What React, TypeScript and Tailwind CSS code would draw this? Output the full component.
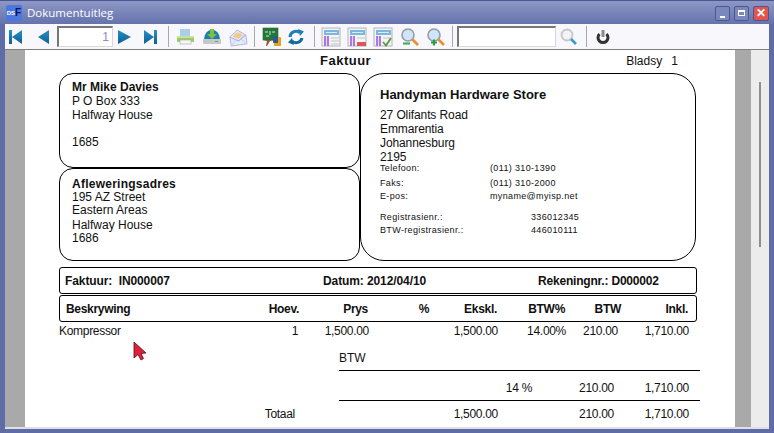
import * as React from "react";

const rowGrid =
  "grid grid-cols-[240px_70px_61px_68px_68px_56px_67px] text-right tracking-[-0.3px]";
const headGrid =
  "grid grid-cols-[238px_70px_61px_68px_68px_56px_67px] text-right tracking-[-0.3px]";

function Sep({ className }: { className: string }) {
  return <div className={`w-px h-[21px] bg-[#a8a8a8] ${className}`} />;
}

function Arrow({ dir, bar, className }: { dir: "l" | "r"; bar?: boolean; className: string }) {
  let tri = "";
  if (dir === "l") tri = bar ? "M17 3 L17 17 L7 10 Z" : "M17 3 L17 17 L6 10 Z";
  else tri = bar ? "M3 3 L3 17 L13 10 Z" : "M3 3 L3 17 L16 10 Z";
  const barX = dir === "l" ? 4 : 13;
  return (
    <svg width="20" height="20" viewBox="0 0 20 20" className={className}>
      <defs>
        <linearGradient id="navg" x1="0" y1="0" x2="0" y2="1">
          <stop offset="0" stopColor="#2a8fc4" />
          <stop offset="1" stopColor="#0d5f96" />
        </linearGradient>
      </defs>
      <path d={tri} fill="url(#navg)" />
      {bar && <rect x={barX} y="3" width="3" height="14" fill="url(#navg)" />}
    </svg>
  );
}

function PrintIcon({ className }: { className: string }) {
  return (
    <svg width="20" height="20" viewBox="0 0 20 20" className={className}>
      <rect x="5" y="2" width="10" height="7" fill="#a9cdea" />
      <rect x="2" y="9" width="17" height="6" rx="1" fill="#9ccb68" />
      <rect x="2" y="9" width="17" height="2" fill="#c6e4a0" />
      <rect x="5" y="13" width="11" height="4" fill="#f6f6f6" stroke="#a8a8a8" strokeWidth="0.6" />
    </svg>
  );
}

function DownloadIcon({ className }: { className: string }) {
  return (
    <svg width="20" height="20" viewBox="0 0 20 20" className={className}>
      <path d="M2 12 Q3 3 10 3 Q17 3 18 12 Z" fill="#1f7fa8" />
      <path d="M8 2 H12 V7 H15 L10 12 L5 7 H8 Z" fill="#7cc043" />
      <rect x="1" y="12" width="18" height="5" rx="1" fill="#c4c8cc" />
      <rect x="13" y="14" width="3" height="1" fill="#6fb23a" />
    </svg>
  );
}

function MailIcon({ className }: { className: string }) {
  return (
    <svg width="20" height="20" viewBox="0 0 20 20" className={className}>
      <g transform="rotate(-8 10 10)">
        <path d="M2 9 L10 3 L18 9 V18 H2 Z" fill="#e4eafa" stroke="#a4b0dc" strokeWidth="0.8" />
        <path d="M5 9 Q10 2 15 9 L10 12 Z" fill="#f2ca90" />
        <path d="M2 9 L10 14 L18 9" fill="none" stroke="#a4b0dc" strokeWidth="1" />
        <path d="M2 18 L8 12 M18 18 L12 12" stroke="#c0cbe8" strokeWidth="0.8" />
      </g>
    </svg>
  );
}

function BoardIcon({ className }: { className: string }) {
  return (
    <svg width="20" height="20" viewBox="0 0 20 20" className={className}>
      <rect x="1" y="1" width="15" height="12" fill="#1f7a3a" stroke="#3a5a2a" strokeWidth="0.6" />
      <path d="M3 5 H6 M8 4 V8 M10 5 H13 M4 9 H7" stroke="#e8f4e0" strokeWidth="0.9" />
      <path d="M1 13 H12 L8 14 L5 19 H4 L5 14 Z" fill="#8a5a2a" />
      <rect x="12" y="10" width="7" height="9" rx="1" fill="#e8a020" />
      <rect x="11" y="9" width="5" height="7" rx="1" fill="#2a5a8a" />
    </svg>
  );
}

function RefreshIcon({ className }: { className: string }) {
  return (
    <svg width="20" height="20" viewBox="0 0 20 20" className={className}>
      <path d="M4 10 A6 6 0 0 1 13.5 5.5" fill="none" stroke="#1f7fb0" strokeWidth="3" />
      <path d="M12 2 L18 4.5 L14 9 Z" fill="#1f7fb0" />
      <path d="M16 11 A6 6 0 0 1 6 14" fill="none" stroke="#0f6a9c" strokeWidth="3" />
      <path d="M8 18 L2 15.5 L6 11 Z" fill="#0f6a9c" />
    </svg>
  );
}

function ReportIcon({ variant, className }: { variant: "plain" | "del" | "check"; className: string }) {
  return (
    <svg width="20" height="20" viewBox="0 0 20 20" className={className}>
      <rect x="1" y="1" width="18" height="18" fill="#f4f4f4" stroke="#b4b4b4" strokeWidth="1" />
      <rect x="3" y="3" width="15" height="5" fill="#7ab8e0" />
      <rect x="5" y="5" width="11" height="1" fill="#dbeaf6" />
      <rect x="3" y="9" width="5" height="10" fill="#a878e8" />
      <rect x="5" y="9" width="1" height="10" fill="#e6dcf8" />
      {variant === "plain" && (
        <path d="M10 11 H18 M10 14 H18 M10 17 H18" stroke="#d0d4d8" strokeWidth="1.4" />
      )}
      {variant === "del" && (
        <>
          <path d="M10 11 H18" stroke="#d0d4d8" strokeWidth="1.4" />
          <rect x="10" y="15" width="9" height="4" fill="#d8555c" />
        </>
      )}
      {variant === "check" && (
        <>
          <path d="M10 11 H18" stroke="#d0d4d8" strokeWidth="1.4" />
          <path d="M10 15 L13 18.5 L18 11" fill="none" stroke="#5a9a3a" strokeWidth="1.8" />
        </>
      )}
    </svg>
  );
}

function ZoomIcon({ plus, className }: { plus?: boolean; className: string }) {
  return (
    <svg width="20" height="20" viewBox="0 0 20 20" className={className}>
      <circle cx="8" cy="8" r="6" fill="#cfe6f8" stroke="#969ba4" strokeWidth="1.6" />
      <path d="M12.5 12.5 L18 18" stroke="#e8902c" strokeWidth="2.6" />
      {plus ? (
        <path d="M5 15.5 H11 M8 12.5 V18.5" stroke="#2f9a4a" strokeWidth="2.2" />
      ) : (
        <path d="M3 16.5 H10" stroke="#4aa860" strokeWidth="2.2" />
      )}
    </svg>
  );
}

function SearchIcon({ className }: { className: string }) {
  return (
    <svg width="20" height="20" viewBox="0 0 20 20" className={className}>
      <circle cx="8" cy="8" r="5.5" fill="#f2f4f6" stroke="#c4c8cc" strokeWidth="1.8" />
      <path d="M12 12 L17 17" stroke="#3d9ac8" strokeWidth="2.6" />
    </svg>
  );
}

function PowerIcon({ className }: { className: string }) {
  return (
    <svg width="20" height="20" viewBox="0 0 20 20" className={className}>
      <path d="M6.5 7 A5 5 0 1 0 13.5 7" fill="none" stroke="#333" strokeWidth="3" />
      <rect x="8.5" y="3" width="3" height="7" fill="#8a8a8a" />
    </svg>
  );
}

function WinButton({ className, children }: { className: string; children: React.ReactNode }) {
  return (
    <div className={`h-[15px] rounded-[2px] border border-[#4a5790] flex items-center justify-center ${className}`}>
      {children}
    </div>
  );
}

export default function App() {
  return (
    <div className="relative w-[774px] h-[433px] overflow-hidden bg-[#5f6ca8] flex flex-col font-['Liberation_Sans',Arial,sans-serif] text-[12px] text-[#111]">
      {/* title bar */}
      <div className="h-[24px] shrink-0 flex items-center bg-gradient-to-b from-[#8e98c6] to-[#6572ac] border-t border-[#4a5690]">
        <div className="ml-[6px] w-[16px] h-[16px] bg-[#4a78e0] flex items-center justify-center rounded-[2px] text-[10px] font-bold leading-none text-[#0a1050]">
          <span className="text-white text-[6px]">DS</span>F
        </div>
        <span className="ml-[5px] text-white text-[11.5px] font-['Open_Sans',sans-serif]">Dokumentuitleg</span>
        <div className="ml-auto mr-[5px] flex items-center gap-[4px] mt-[1px]">
          <WinButton className="w-[15px] bg-[#7b88bd] items-end pb-[2px]">
            <div className="w-[5px] h-[2px] bg-white" />
          </WinButton>
          <WinButton className="w-[15px] bg-[#7b88bd]">
            <div className="w-[7px] h-[6px] border border-t-2 border-white" />
          </WinButton>
          <WinButton className="w-[16px] bg-[#e4534c] text-white text-[12px] font-bold leading-none">✕</WinButton>
        </div>
      </div>

      {/* inner window */}
      <div className="mx-[5px] mb-[4px] flex-1 flex flex-col min-h-0 bg-[#ececec]">
        {/* toolbar */}
        <div className="h-[26px] shrink-0 flex items-center bg-[#f8f8fc] border-b border-[#808080]">
          <Arrow dir="l" bar className="ml-0" />
          <Arrow dir="l" className="ml-[7px]" />
          <div className="ml-[5px] w-[56px] h-[21px] bg-white border border-[#d8d8d8] border-t-[#777] border-l-[#777] border-l-2 border-t-2 text-right pr-[3px] text-[12px] leading-[18px] text-[#8e86c8]">
            1
          </div>
          <Arrow dir="r" className="ml-[2px]" />
          <Arrow dir="r" bar className="ml-[6px]" />
          <Sep className="ml-[7px]" />
          <PrintIcon className="ml-[6px]" />
          <DownloadIcon className="ml-[7px]" />
          <MailIcon className="ml-[6px]" />
          <Sep className="ml-[6px]" />
          <BoardIcon className="ml-[7px]" />
          <RefreshIcon className="ml-[4px]" />
          <Sep className="ml-[8px]" />
          <ReportIcon variant="plain" className="ml-[6px]" />
          <ReportIcon variant="del" className="ml-[6px]" />
          <ReportIcon variant="check" className="ml-[6px]" />
          <ZoomIcon className="ml-[7px]" />
          <ZoomIcon plus className="ml-[6px]" />
          <Sep className="ml-[6px]" />
          <div className="ml-[4px] w-[99px] h-[21px] bg-white border border-[#d8d8d8] border-t-[#777] border-l-[#777] border-l-2 border-t-2" />
          <SearchIcon className="ml-[3px]" />
          <Sep className="ml-[7px]" />
          <PowerIcon className="ml-[6px]" />
        </div>

        {/* preview area */}
        <div className="flex-1 flex min-h-0 border-b-2 border-[#e0e0e0]">
          <div className="w-[20px] shrink-0 bg-[#a9a9a9]" />
          <div className="w-[710px] shrink-0 bg-white overflow-hidden pl-[34px]">
            {/* heading */}
            <div className="h-[23px] w-[637px] flex">
              <span className="ml-[261px] mt-[3px] text-[13px] leading-[16px] font-bold tracking-[0.5px]">Faktuur</span>
              <span className="ml-[255px] mt-[3px] leading-[16px]">Bladsy</span>
              <span className="ml-[9px] mt-[3px] leading-[16px]">1</span>
            </div>

            {/* address boxes */}
            <div className="flex h-[188px] w-[637px]">
              <div className="w-[301px] flex flex-col">
                <div className="h-[95px] border border-black rounded-[14px] pl-[12px] pt-[6px] leading-[14px]">
                  <div className="font-bold">Mr Mike Davies</div>
                  <div>P O Box 333</div>
                  <div>Halfway House</div>
                  <div className="mt-[13px]">1685</div>
                </div>
                <div className="h-[93px] border border-black rounded-[14px] pl-[12px] pt-[9px] leading-[13px]">
                  <div className="font-bold tracking-[0.25px]">Afleweringsadres</div>
                  <div>195 AZ Street</div>
                  <div>Eastern Areas</div>
                  <div className="mt-[2px]">Halfway House</div>
                  <div>1686</div>
                </div>
              </div>
              <div className="w-[336px] border border-black rounded-[24px] pl-[19px] pt-[13px]">
                <div className="text-[13px] leading-[16px] font-bold">Handyman Hardware Store</div>
                <div className="mt-[5px] leading-[14px] tracking-[-0.1px]">
                  <div>27 Olifants Road</div>
                  <div>Emmarentia</div>
                  <div>Johannesburg</div>
                  <div>2195</div>
                </div>
                <div className="-mt-[3px] text-[9px] leading-[14px] tracking-[0.35px]">
                  <div className="flex"><span className="w-[110px]">Telefoon:</span><span>(011) 310-1390</span></div>
                  <div className="flex mt-[1px]"><span className="w-[110px]">Faks:</span><span>(011) 310-2000</span></div>
                  <div className="flex -mt-[1px]"><span className="w-[110px]">E-pos:</span><span>myname@myisp.net</span></div>
                  <div className="flex mt-[7px]"><span className="w-[151px]">Registrasienr.:</span><span>336012345</span></div>
                  <div className="flex -mt-[1px]"><span className="w-[151px]">BTW-registrasienr.:</span><span>446010111</span></div>
                </div>
              </div>
            </div>

            {/* invoice strip */}
            <div className="mt-[6px] h-[27px] w-[638px] border border-black rounded-[3px] flex items-center pl-[5px] font-bold tracking-[-0.1px]">
              <span className="w-[258px]">Faktuur:&nbsp; IN000007</span>
              <span className="w-[215px]">Datum: 2012/04/10</span>
              <span className="tracking-[-0.2px]">Rekeningnr.: D000002</span>
            </div>

            {/* column headers */}
            <div className={`mt-[1px] h-[27px] w-[638px] border border-black rounded-[3px] items-center font-bold ${headGrid}`}>
              <div className="flex justify-between pl-[6px] -mr-[1px]">
                <span>Beskrywing</span>
                <span>Hoev.</span>
              </div>
              <span>Prys</span>
              <span>%</span>
              <span>Ekskl.</span>
              <span>BTW%</span>
              <span>BTW</span>
              <span>Inkl.</span>
            </div>

            {/* item */}
            <div className={`w-[638px] h-[18px] leading-[18px] ${rowGrid}`}>
              <div className="flex justify-between">
                <span>Kompressor</span>
                <span className="pr-[1px]">1</span>
              </div>
              <span>1,500.00</span>
              <span />
              <span>1,500.00</span>
              <span>14.00%</span>
              <span className="pr-[4px]">210.00</span>
              <span>1,710.00</span>
            </div>

            {/* vat summary */}
            <div className="ml-[280px] w-[361px] mt-[10px] h-[21px] border-b border-black leading-[16px]">BTW</div>
            <div className={`w-[638px] h-[29px] pt-[2px] leading-[30px] ${rowGrid}`}>
              <span />
              <span />
              <span />
              <span />
              <span className="pr-[34px] whitespace-nowrap">14 %</span>
              <span className="pr-[8px]">210.00</span>
              <span>1,710.00</span>
            </div>
            <div className="ml-[280px] w-[361px] border-t border-black" />
            <div className={`w-[638px] h-[27px] leading-[27px] ${rowGrid}`}>
              <span className="pr-[4px]">Totaal</span>
              <span />
              <span />
              <span>1,500.00</span>
              <span />
              <span className="pr-[8px]">210.00</span>
              <span>1,710.00</span>
            </div>
          </div>
          <div className="w-[16px] shrink-0 bg-[#a9a9a9]" />
          <div className="flex-1 pt-[32px] flex justify-center">
            <div className="w-[2px] h-[165px] bg-[#8e8e8e]" />
          </div>
        </div>
      </div>

      {/* mouse pointer */}
      <svg width="15" height="20" viewBox="0 0 15 20" className="absolute left-[133px] top-[341px]">
        <path d="M1 1 L1 17 L5 13.5 L8 19 L10.5 17.5 L8 12.5 L13 12 Z" fill="#e0203c" stroke="#501018" strokeWidth="0.8" />
      </svg>
    </div>
  );
}
